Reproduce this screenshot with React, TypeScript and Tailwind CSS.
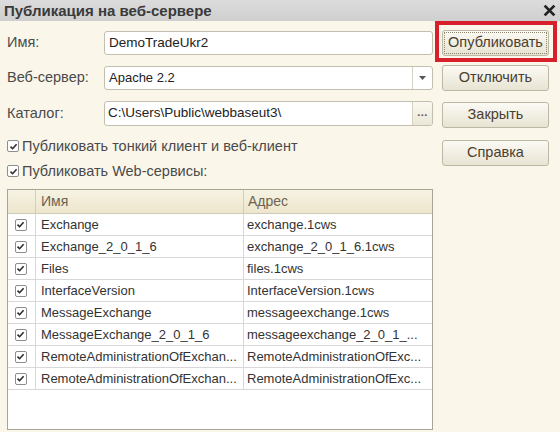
import React from "react";

const rows = [
  ["Exchange", "exchange.1cws"],
  ["Exchange_2_0_1_6", "exchange_2_0_1_6.1cws"],
  ["Files", "files.1cws"],
  ["InterfaceVersion", "InterfaceVersion.1cws"],
  ["MessageExchange", "messageexchange.1cws"],
  ["MessageExchange_2_0_1_6", "messageexchange_2_0_1_..."],
  ["RemoteAdministrationOfExchan...", "RemoteAdministrationOfExc..."],
  ["RemoteAdministrationOfExchan...", "RemoteAdministrationOfExc..."],
];

function Check() {
  return (
    <span className="flex h-[12px] w-[12px] shrink-0 items-center justify-center rounded-[2px] border border-[#8e8e8e] bg-white">
      <svg width="9" height="9" viewBox="0 0 9 9">
        <path d="M1.5 4.6 L3.6 6.7 L7.6 2.2" fill="none" stroke="#2b2b2b" strokeWidth="1.6" />
      </svg>
    </span>
  );
}

function Btn({ children }: { children: React.ReactNode }) {
  return (
    <div className="flex h-[26px] w-[107px] items-center justify-center rounded-[3px] border border-[#bdb8a6] bg-gradient-to-b from-[#fbfaf4] to-[#e8e4d3] text-[14.5px] text-[#4a4030]">
      {children}
    </div>
  );
}

export default function App() {
  return (
    <div className="flex h-[432px] w-[560px] flex-col overflow-hidden bg-[#faf7ea] font-['Liberation_Sans',Arial,sans-serif]">
      {/* title bar */}
      <div className="flex h-[21px] items-center justify-between bg-gradient-to-b from-[#dcdcdc] to-[#cfcfcf] pl-[4px] pr-[4px]">
        <span className="text-[15px] font-bold leading-none text-[#3a3a3a]">Публикация на веб-сервере</span>
        <svg width="13" height="13" viewBox="0 0 12 12">
          <path d="M1.5 1.5 L10.5 10.5 M10.5 1.5 L1.5 10.5" stroke="#222" strokeWidth="2.6" />
        </svg>
      </div>

      <div className="flex px-[7px]">
        {/* left column */}
        <div className="flex w-[426px] flex-col pt-[10px]">
          <div className="flex h-[24px] items-center">
            <span className="w-[97px] text-[14.5px] text-[#4a4a4a]">Имя:</span>
            <div className="flex h-[24px] flex-1 items-center rounded-[3px] border border-[#c3bfae] bg-white pl-[4px] text-[13.5px] text-[#222]">
              DemoTradeUkr2
            </div>
          </div>

          <div className="mt-[11px] flex h-[24px] items-center">
            <span className="w-[97px] text-[14.5px] text-[#4a4a4a]">Веб-сервер:</span>
            <div className="flex h-[24px] flex-1 items-center rounded-[3px] border border-[#c3bfae] bg-white text-[13px] text-[#222]">
              <span className="flex-1 pl-[4px]">Apache 2.2</span>
              <span className="flex h-full w-[20px] items-center justify-center border-l border-[#d6d2c2]">
                <svg width="7" height="4" viewBox="0 0 7 4">
                  <path d="M0 0 H7 L3.5 4 Z" fill="#555" />
                </svg>
              </span>
            </div>
          </div>

          <div className="mt-[11px] flex h-[25px] items-center">
            <span className="w-[97px] text-[14.5px] text-[#4a4a4a]">Каталог:</span>
            <div className="flex h-[25px] flex-1 items-center rounded-[3px] border border-[#c3bfae] bg-white text-[13.5px] text-[#222]">
              <span className="flex-1 overflow-hidden whitespace-nowrap pl-[3px]">C:\Users\Public\webbaseut3\</span>
              <span className="flex h-full w-[20px] items-center justify-center rounded-r-[3px] border-l border-[#d6d2c2] bg-gradient-to-b from-[#faf8f0] to-[#ebe7d7] pb-[2px] text-[11px] font-bold tracking-[0.5px] text-[#555]">
                ...
              </span>
            </div>
          </div>

          <div className="mt-[13px] flex h-[14px] items-center gap-[3px] text-[14.5px] leading-none text-[#4a4a4a]">
            <Check />
            <span>Публиковать тонкий клиент и веб-клиент</span>
          </div>
          <div className="mt-[11px] flex h-[14px] items-center gap-[3px] text-[14.5px] leading-none text-[#4a4a4a]">
            <Check />
            <span>Публиковать Web-сервисы:</span>
          </div>

          {/* table */}
          <div className="mt-[11px] flex h-[241px] flex-col border border-[#a9a494] bg-white text-[13px] text-[#333]">
            <div className="flex h-[24px] border-b border-[#cfcab8] bg-gradient-to-b from-[#f7f3e3] to-[#ece6cd] text-[14px] text-[#6e6250]">
              <div className="w-[28px] border-r border-[#d3cebd]" />
              <div className="flex w-[208px] items-center border-r border-[#d3cebd] pl-[5px]">Имя</div>
              <div className="flex flex-1 items-center pl-[4px]">Адрес</div>
            </div>
            {rows.map(([name, addr], i) => (
              <div key={i} className="flex h-[22px] border-b border-[#d8d8d8]">
                <div className="flex w-[28px] items-center justify-center border-r border-[#d8d8d8] pr-[2px]">
                  <Check />
                </div>
                <div className="flex w-[208px] items-center overflow-hidden whitespace-nowrap border-r border-[#d8d8d8] pl-[5px]">
                  {name}
                </div>
                <div className="flex flex-1 items-center overflow-hidden whitespace-nowrap pl-[3px]">{addr}</div>
              </div>
            ))}
          </div>
        </div>

        {/* right column */}
        <div className="ml-[9px] flex flex-col pt-[9px]">
          <div className="relative">
            <div className="absolute left-[-7px] top-[-9px] h-[41px] w-[122px] border-[4px] border-[#d8202c]" />
            <div className="flex h-[26px] w-[107px] items-center justify-center rounded-[3px] border border-[#bdb8a6] bg-gradient-to-b from-[#fbfaf4] to-[#e8e4d3] text-[14.5px] text-[#4a4030]">
              <span className="flex h-[22px] w-[103px] items-center justify-center border border-dotted border-[#8a8470]">
                Опубликовать
              </span>
            </div>
          </div>
          <div className="mt-[9px]">
            <Btn>Отключить</Btn>
          </div>
          <div className="mt-[11px]">
            <Btn>Закрыть</Btn>
          </div>
          <div className="mt-[12px]">
            <Btn>Справка</Btn>
          </div>
        </div>
      </div>
    </div>
  );
}
